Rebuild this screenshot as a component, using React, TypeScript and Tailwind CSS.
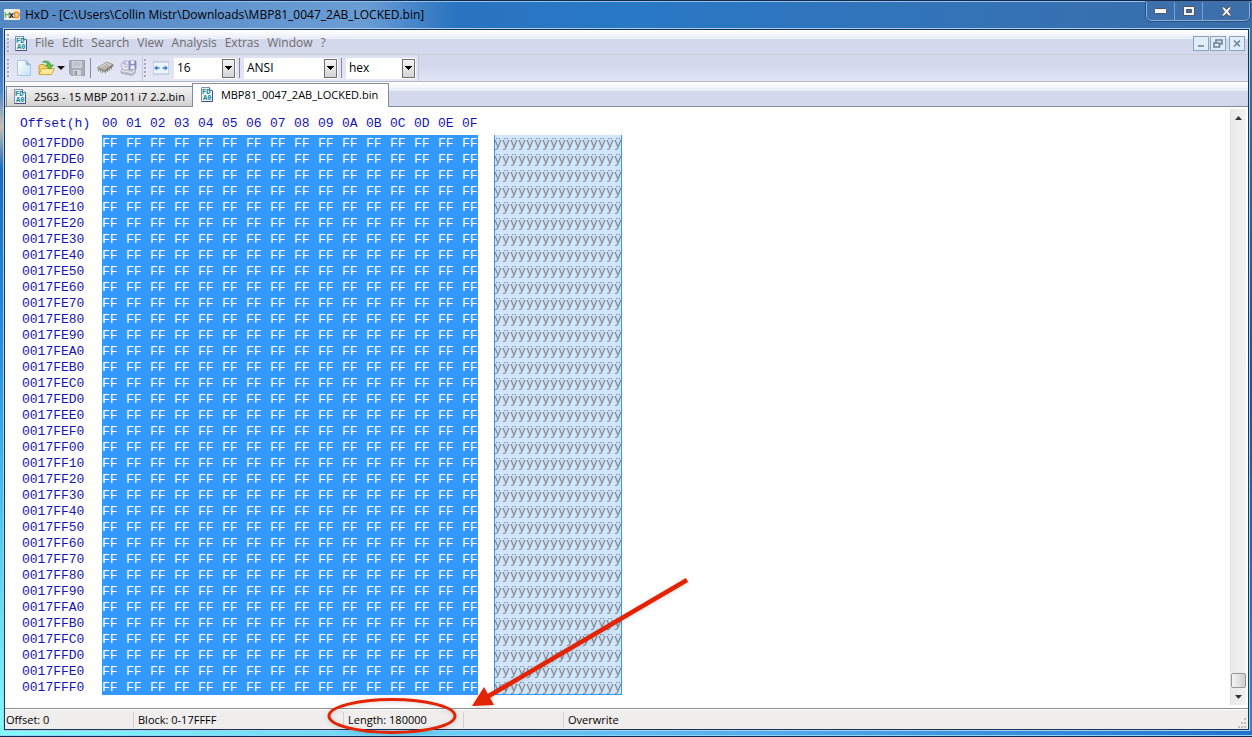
import { useState, type ReactNode } from "react";
import clsx from "clsx";

const MENU = ["File", "Edit", "Search", "View", "Analysis", "Extras", "Window", "?"];
const COLUMNS = Array.from({ length: 16 }, (_, i) => i.toString(16).toUpperCase().padStart(2, "0"));
const ROWS = Array.from({ length: 35 }, (_, i) =>
  (0x17fdd0 + i * 16).toString(16).toUpperCase().padStart(8, "0")
);

function FileIcon() {
  return (
    <svg width="12" height="15" viewBox="0 0 12 15" className="shrink-0" aria-hidden="true">
      <path d="M.5.5h8l3 3v11H.5z" fill="#eef2fb" stroke="#7f8fb8" />
      <path d="M8.500.5v3h3" fill="#fff" stroke="#5f6f98" />
      <path d="M11.500 4v10.500H.5" fill="none" stroke="#4b4f86" />
      <g fill="#0b8a8c" className="font-['Liberation_Mono',monospace] text-[7px] font-bold">
        <text x="1" y="7">FD</text>
        <text x="2" y="13">A0</text>
      </g>
    </svg>
  );
}

function AppIcon() {
  return (
    <svg width="16" height="14" viewBox="0 0 16 14" className="shrink-0" aria-hidden="true">
      <rect y="1" width="16" height="11" rx="1" fill="#eef1ea" />
      <rect x="10.500" y="1.500" width="5" height="10" rx="2" fill="#f8d3a4" />
      <g className="font-['Liberation_Sans',sans-serif] text-[9px] font-bold">
        <text x="0" y="10" fill="#6fae7a">H</text>
        <text x="5" y="10" fill="#111">x</text>
        <text x="9.500" y="10" fill="#e8871d">D</text>
      </g>
    </svg>
  );
}

function NewIcon() {
  return (
    <svg width="14" height="16" viewBox="0 0 14 16">
      <defs>
        <linearGradient id="page" x1="0" y1="0" x2="1" y2="1">
          <stop offset="0" stopColor="#fff" />
          <stop offset="1" stopColor="#c3e2f8" />
        </linearGradient>
      </defs>
      <path d="M.5.5h8.500l4.500 4.500v10.500H.5z" fill="url(#page)" stroke="#a9c6e2" />
      <path d="M9 .5V5h4.500z" fill="#9cc0e8" stroke="#8fb2d8" strokeWidth=".6" />
    </svg>
  );
}

function OpenIcon() {
  return (
    <svg width="17" height="16" viewBox="0 0 17 16">
      <path d="M1 14V5.500l1-1h4l1 1.500h6V14z" fill="#f3d272" stroke="#c99a2e" strokeWidth=".9" />
      <path d="M1 14.500L4 8.500h12.300L13.500 14.500z" fill="#fde99a" stroke="#cf9f2f" strokeWidth=".9" />
      <path d="M4.500 2C8 0 12 1 12.700 5h2.800l-4 4.200-3.700-4.200h2.300C9.500 3 7.500 2 4.500 2z" fill="#5fc24a" stroke="#36902e" strokeWidth=".7" />
    </svg>
  );
}

function SaveIcon() {
  return (
    <svg width="16" height="16" viewBox="0 0 16 16">
      <path d="M.5.5h15v15H2.500l-2-2z" fill="#a9adb9" stroke="#9a9fac" />
      <rect x="3" y="1" width="10" height="7" fill="#cdd0da" />
      <path d="M4.500 3h7M4.500 5h7" stroke="#b2b6c2" />
      <rect x="4" y="10" width="8" height="5.500" fill="#d4d7e0" />
      <rect x="5.500" y="11" width="2.500" height="4" fill="#9297a5" />
    </svg>
  );
}

function ChipIcon() {
  return (
    <svg width="17" height="14" viewBox="0 0 17 14">
      <path d="M.7 6.500L9.500 1.200l6.800 2.300L7.600 9.500z" fill="#b9b8b0" stroke="#8a8981" strokeWidth=".7" />
      <path d="M.7 6.500v1.700l6.900 3V9.500z" fill="#8f8e87" />
      <path d="M7.600 9.500v1.700l8.700-6V3.500z" fill="#76756e" />
      <path d="M3 6.200l6.500-3.800 4 1.300" fill="none" stroke="#deddd6" />
      <path d="M1.500 8.500v2M3.500 9.500v2M5.500 10.300v2M8.500 10.500v2M10.500 9v2M12.500 7.700v2M14.500 6.200v2" stroke="#85847c" strokeWidth=".9" />
    </svg>
  );
}

function DiskIcon() {
  return (
    <svg width="17" height="16" viewBox="0 0 17 16">
      <path d="M1 10l3-2h11.500v4.500L12 15.500 1 13z" fill="#b9bccb" stroke="#9a9db0" strokeWidth=".7" />
      <path d="M1 10.500l11 2 3.500-3" fill="none" stroke="#f2f3f8" />
      <circle cx="6" cy="5.500" r="4.800" fill="#e6e4f0" stroke="#a9a9c2" strokeWidth=".8" />
      <path d="M6 5.500L2 3.200A4.800 4.800 0 0 1 6 .9z" fill="#c7b6e6" />
      <circle cx="6" cy="5.500" r="1.400" fill="#fff" stroke="#9a9ab8" strokeWidth=".7" />
      <path d="M9 1h7v8H9z" fill="#8a93c8" stroke="#737cb2" strokeWidth=".7" />
      <path d="M10.800 1h3.400v2.800h-3.400zM10.500 5.500h4V9h-4z" fill="#f3f5fd" />
    </svg>
  );
}

function BytesIcon() {
  return (
    <svg width="16" height="14" viewBox="0 0 16 14">
      <rect x=".5" y=".5" width="15" height="13" fill="#eaf3fc" stroke="#c3d2e6" />
      <path d="M0 1h16M0 13h16" stroke="#b2c6de" />
      <path d="M1 7l3.200-2.500v1.800H6.500v1.400H4.200v1.800zM15 7l-3.200-2.500v1.800H9.500v1.400h2.300v1.800z" fill="#3f7fc4" />
    </svg>
  );
}

function Grip() {
  return (
    <svg width="3" height="18" viewBox="0 0 3 18" shapeRendering="crispEdges" className="shrink-0">
      {[0, 4, 8, 12, 16].map((y) => (
        <g key={y}>
          <rect x="1" y={y + 1} width="2" height="1" fill="#fff" />
          <rect x="0" y={y} width="2" height="2" fill="#a3a8ba" />
        </g>
      ))}
    </svg>
  );
}

function Separator() {
  return <div className="h-5 w-px shrink-0 bg-[#85899b]" />;
}

function ToolButton({ label, children }: { label: string; children: ReactNode }) {
  return (
    <button aria-label={label} className="flex h-5 shrink-0 items-center justify-center">
      {children}
    </button>
  );
}

function Combo({ label, options, className }: { label: string; options: string[]; className: string }) {
  return (
    <div className={clsx("relative h-[21px] shrink-0 bg-white", className)}>
      <select aria-label={label} className="h-full w-full appearance-none bg-transparent pl-[3px] text-black outline-none">
        {options.map((option) => (
          <option key={option}>{option}</option>
        ))}
      </select>
      <span className="pointer-events-none absolute top-px right-px flex h-[19px] w-[13px] items-center justify-center border border-[#707070] bg-gradient-to-b from-[#f4f4f4] to-[#d4d4d4]">
        <svg width="7" height="4" viewBox="0 0 7 4" shapeRendering="crispEdges">
          <path d="M0 0h7v1H6v1H5v1H4v1H3V3H2V2H1V1H0z" fill="#000" />
        </svg>
      </span>
    </div>
  );
}

function TitleBar() {
  return (
    <header className="flex h-[27px] items-start justify-between border-t border-[#9dbfe6] bg-linear-to-r from-[#2a67b2] via-[#2878c6] to-[#3a6ea9]">
      <div className="flex h-[26px] items-center gap-1 bg-linear-to-r from-[#7fa6d4]/50 via-[#8db4e0]/65 via-80% to-transparent pr-8 pl-1">
        <AppIcon />
        <h1 className="pl-px whitespace-nowrap text-black">
          HxD - [C:\Users\Collin Mistr\Downloads\MBP81_0047_2AB_LOCKED.bin]
        </h1>
      </div>
      <div className="mr-[2px] flex h-[19px] shrink-0 rounded-b-[5px] border border-t-0 border-[#a4bfdd]/80 bg-[#3f70ab]/60 outline outline-[#17396a]/60">
        <button aria-label="Minimize" className="flex w-7 items-center justify-center border-r border-[#a4bfdd]/60">
          <svg width="13" height="6" viewBox="0 0 13 6">
            <rect x=".5" y=".5" width="12" height="5" rx="1" fill="#f6f6f6" stroke="#4b5566" />
          </svg>
        </button>
        <button aria-label="Maximize" className="flex w-7 items-center justify-center border-r border-[#a4bfdd]/60">
          <svg width="12" height="10" viewBox="0 0 12 10">
            <path d="M.5.5h11v9H.5zM3.500 3.500v3h5v-3z" fill="#f6f6f6" stroke="#4b5566" fillRule="evenodd" />
          </svg>
        </button>
        <button aria-label="Close" className="flex w-[46px] items-center justify-center">
          <svg width="13" height="11" viewBox="0 0 13 11">
            <path d="M1 1h3.200l2.300 2.500L8.800 1H12L8.500 5.500 12 10H8.800L6.500 7.500 4.200 10H1l3.500-4.500z" fill="#f8f8f8" stroke="#4b5566" />
          </svg>
        </button>
      </div>
    </header>
  );
}

function ChildButton({ label, path }: { label: string; path: string }) {
  return (
    <button aria-label={label} className="flex h-[15px] w-4 items-center justify-center border border-[#8ba3be] bg-[#e0edf8]">
      <svg width="10" height="9" viewBox="0 0 10 9">
        <path d={path} fill="none" stroke="#6f8298" strokeWidth="1.600" />
      </svg>
    </button>
  );
}

function MenuBar() {
  return (
    <nav className="flex h-[25px] shrink-0 items-center border-b border-[#cbccd0] bg-[linear-gradient(#ffffff,#e8edf6_9px,#d3d8ec_9px)] pt-[2px] pr-[3px] pl-[2px]">
      <Grip />
      <div className="pl-[5px]">
        <FileIcon />
      </div>
      <ul className="flex grow gap-2 pl-2 text-[#6d6d6d]">
        {MENU.map((item) => (
          <li key={item}>
            <button>{item}</button>
          </li>
        ))}
      </ul>
      <div className="flex gap-px">
        <ChildButton label="Minimize document" path="M2 7h6" />
        <ChildButton label="Restore document" path="M3 3.500V1h6v4H7M1 4h5.500v4H1z" />
      </div>
      <div className="pl-[3px]">
        <ChildButton label="Close document" path="M2 1.500l6 6M8 1.500l-6 6" />
      </div>
    </nav>
  );
}

function ToolBar() {
  return (
    <div className="flex h-[27px] shrink-0 items-stretch border-b border-[#b3b7ca] bg-[linear-gradient(#d3d8ec_12px,#e0e6f6)]">
      <div className="flex items-center border-r border-[#c6cadb] bg-linear-to-b from-[#dde1f1] to-[#e3e7f5] pr-[5px] pl-[2px]">
        <Grip />
        <div className="flex items-center pl-[7px]">
          <ToolButton label="New"><NewIcon /></ToolButton>
          <div className="flex items-center gap-[2px] pl-[7px]">
            <ToolButton label="Open"><OpenIcon /></ToolButton>
            <ToolButton label="Recent files">
              <svg width="8" height="4" viewBox="0 0 8 4">
                <path d="M0 0h8L4 4z" fill="#111" />
              </svg>
            </ToolButton>
          </div>
          <div className="flex items-center gap-[5px] pr-[6px] pl-[4px]">
            <ToolButton label="Save"><SaveIcon /></ToolButton>
            <Separator />
          </div>
          <div className="flex items-center gap-[6px]">
            <ToolButton label="Open main memory"><ChipIcon /></ToolButton>
            <ToolButton label="Open disk"><DiskIcon /></ToolButton>
          </div>
        </div>
      </div>
      <div className="flex items-center border-r border-[#c6cadb] bg-linear-to-b from-[#dde1f1] to-[#e3e7f5] pr-[2px] pl-px">
        <Grip />
        <div className="flex items-center gap-[5px] pl-[6px]">
          <ToolButton label="Adjust bytes per row"><BytesIcon /></ToolButton>
          <Combo label="Bytes per row" options={["16", "8", "32"]} className="w-[62px]" />
        </div>
        <div className="flex items-center gap-1 pl-[3px]">
          <Separator />
          <Combo label="Character set" options={["ANSI", "DOS/IBM-ASCII", "EBCDIC"]} className="w-[94px]" />
        </div>
        <div className="flex items-center gap-1 pl-[3px]">
          <Separator />
          <Combo label="Offset base" options={["hex", "dec", "oct"]} className="w-[70px]" />
        </div>
      </div>
    </div>
  );
}

function TabBar() {
  const tabs = ["2563 - 15 MBP 2011 i7 2.2.bin", "MBP81_0047_2AB_LOCKED.bin"];
  const [active, setActive] = useState(1);

  return (
    <div role="tablist" className="flex h-[25px] shrink-0 items-end border-b border-[#868b98] bg-[linear-gradient(#ffffff,#e8edf6_9px,#d3d8ec_9px)] pl-px text-[11px]">
      {tabs.map((tab, index) => (
        <button
          key={tab}
          role="tab"
          aria-selected={index === active}
          onClick={() => setActive(index)}
          className={clsx(
            "flex items-center gap-2 border border-b-0 border-[#868b98] whitespace-nowrap text-black",
            index === active
              ? "-mb-px h-[24px] bg-white pr-[10px] pb-[2px] pl-2"
              : "h-[20px] border-r-0 bg-linear-to-b from-[#f3f3f3] to-[#d2d2d2] pr-[7px] pl-[7px]"
          )}
        >
          <FileIcon />
          {tab}
        </button>
      ))}
    </div>
  );
}

function HexView() {
  return (
    <table className="table-fixed border-collapse font-['Liberation_Mono',monospace] text-[13px] leading-[14px] text-[#1414b8]">
      <colgroup>
        <col className="w-[82px]" />
        {COLUMNS.map((column) => (
          <col key={column} className={column === "0F" ? "w-4" : "w-6"} />
        ))}
        <col className="w-4" />
        <col className="w-32" />
      </colgroup>
      <thead>
        <tr className="h-5 align-top">
          <th className="p-0 pt-[2px] text-left font-normal">Offset(h)</th>
          {COLUMNS.map((column) => (
            <th key={column} className="p-0 pt-[2px] text-left font-normal">{column}</th>
          ))}
          <th></th>
          <th></th>
        </tr>
      </thead>
      <tbody>
        {ROWS.map((offset, index) => (
          <tr key={offset} className="h-4">
            <th scope="row" className="p-0 pt-[2px] pl-[2px] text-left font-normal">{offset}</th>
            {COLUMNS.map((column) => (
              <td key={column} className="bg-[#3399ff] p-0 pt-[2px] text-white">FF</td>
            ))}
            <td className="p-0"></td>
            <td
              className={clsx(
                "bg-[#cfe6fd] p-0 pt-[2px] whitespace-nowrap text-[#7c7c80]",
                index === ROWS.length - 1
                  ? "shadow-[inset_1px_0_#3399ff,inset_-1px_-1px_#3399ff]"
                  : "shadow-[inset_1px_0_#3399ff,inset_-1px_0_#3399ff]"
              )}
            >
              {COLUMNS.map((column) => (
                <span key={column} className="inline-block w-2 align-top">ÿ</span>
              ))}
            </td>
          </tr>
        ))}
      </tbody>
    </table>
  );
}

function ScrollBar() {
  return (
    <div className="mt-[2px] mr-[2px] mb-[3px] flex w-4 shrink-0 flex-col border-l border-[#e3e3e3] bg-linear-to-r from-[#e9e9e9] to-[#f2f2f2]">
      <button aria-label="Scroll up" className="flex h-[17px] items-center justify-center">
        <svg width="7" height="4" viewBox="0 0 7 4">
          <path d="M0 4h7L3.500 0z" fill="#333" />
        </svg>
      </button>
      <div className="grow" />
      <button aria-label="Scroll position" className="h-[15px] rounded-[2px] border border-[#979797] bg-linear-to-r from-[#f6f6f6] to-[#cfcfd2]" />
      <button aria-label="Scroll down" className="flex h-[17px] items-center justify-center">
        <svg width="7" height="4" viewBox="0 0 7 4">
          <path d="M0 0h7L3.500 4z" fill="#333" />
        </svg>
      </button>
    </div>
  );
}

function StatusBar() {
  return (
    <footer className="flex h-5 shrink-0 items-center border-t border-white bg-[#f0eded] pt-px text-[11px] whitespace-nowrap text-black">
      <div className="w-[129px] border-r border-[#d3d1d1] pl-px">Offset: 0</div>
      <div className="w-[210px] border-r border-[#d3d1d1] pl-1">Block: 0-17FFFF</div>
      <div className="w-[120px] border-r border-[#d3d1d1] pl-1">Length: 180000</div>
      <div className="h-4 w-[100px] border-r border-[#d3d1d1]" />
      <div className="grow pl-1">Overwrite</div>
      <svg width="11" height="11" viewBox="0 0 11 11" shapeRendering="crispEdges" className="self-end">
        <path d="M7 0h2v2H7zM4 4h2v2H4zM7 4h2v2H7zM1 8h2v2H1zM4 8h2v2H4zM7 8h2v2H7z" fill="#bdbaba" />
      </svg>
    </footer>
  );
}

function Annotation() {
  return (
    <svg width="700" height="166" viewBox="0 570 700 166" aria-hidden="true" className="pointer-events-none absolute bottom-0 left-0 drop-shadow-sm">
      <ellipse cx="392" cy="716" rx="63" ry="16.500" fill="none" stroke="#e32402" strokeWidth="3" />
      <path d="M687 580L487 697" stroke="#e32402" strokeWidth="4.500" />
      <path d="M472 706l12-19 10 18z" fill="#e32402" />
    </svg>
  );
}

export default function App() {
  return (
    <div className="relative flex h-screen flex-col overflow-hidden border-y border-[#0d2a52] bg-[#2878c6] font-['Open_Sans','Noto_Sans',sans-serif] text-[12px] leading-4">
      <TitleBar />
      <div className="flex min-h-0 grow">
        <div className="w-[3px] shrink-0 bg-[linear-gradient(#2f66a8,#4d88c8_9%,#c9bfae_14%,#1d6bc0_20%,#2590de_45%,#4cc9ee_70%,#7dfbfb)]" />
        <div className="flex min-w-0 grow flex-col border border-[#a9cdea]">
          <div className="flex min-h-0 grow flex-col border border-[#17365c]">
            <MenuBar />
            <ToolBar />
            <TabBar />
            <main className="flex min-h-0 grow border-b border-[#8f8f8f] bg-white">
              <div className="min-w-0 grow overflow-hidden pt-2 pl-[15px]">
                <HexView />
              </div>
              <ScrollBar />
            </main>
            <StatusBar />
          </div>
        </div>
        <div className="w-[2px] shrink-0 bg-linear-to-b from-[#3d6ea9] via-[#1355a8] to-[#2a82e0]" />
      </div>
      <div className="h-[5px] shrink-0 border-b border-[#8fd6f5] bg-linear-to-r from-[#84fafb] via-[#5fbdf3] to-[#1f72cf]" />
      <Annotation />
    </div>
  );
}
